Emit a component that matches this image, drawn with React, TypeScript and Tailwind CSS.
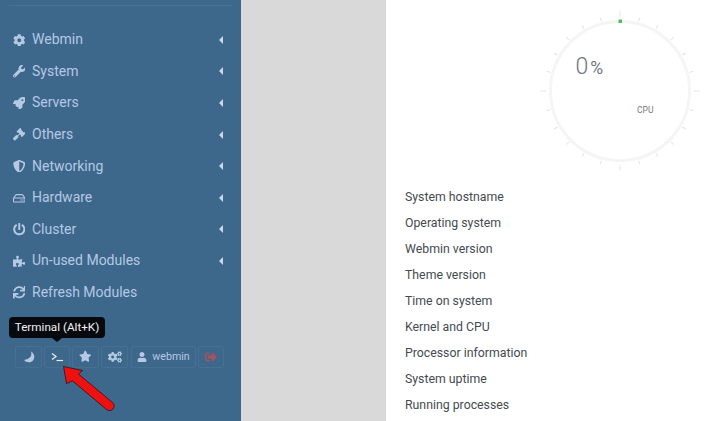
import { FaCog, FaWrench, FaRocket, FaGavel, FaShieldAlt, FaRegHdd, FaPowerOff, FaPuzzlePiece, FaSync, FaStar, FaCogs, FaUser, FaSignOutAlt } from "react-icons/fa";

const menu = [
  { label: "Webmin", icon: FaCog, arrow: true },
  { label: "System", icon: FaWrench, arrow: true },
  { label: "Servers", icon: FaRocket, arrow: true },
  { label: "Others", icon: FaGavel, arrow: true },
  { label: "Networking", icon: FaShieldAlt, arrow: true },
  { label: "Hardware", icon: FaRegHdd, arrow: true },
  { label: "Cluster", icon: FaPowerOff, arrow: true },
  { label: "Un-used Modules", icon: FaPuzzlePiece, arrow: true },
  { label: "Refresh Modules", icon: FaSync, arrow: false },
];

const info = [
  "System hostname",
  "Operating system",
  "Webmin version",
  "Theme version",
  "Time on system",
  "Kernel and CPU",
  "Processor information",
  "System uptime",
  "Running processes",
];

const ticks = Array.from({ length: 24 }, (_, i) => i * 15);

function Gauge() {
  return (
    <div className="relative w-[170px] h-[170px]">
      <svg width="170" height="170" viewBox="0 0 170 170">
        <circle cx="85" cy="85" r="69.5" fill="none" stroke="#f5f5f5" strokeWidth="3" />
        {ticks.map((a) => (
          <line
            key={a}
            x1="85"
            y1={a % 90 === 0 ? 5 : 9}
            x2="85"
            y2={a % 90 === 0 ? 11 : 13}
            stroke="#e4e4e4"
            strokeWidth="1"
            transform={`rotate(${a} 85 85)`}
          />
        ))}
        <rect x="83.5" y="13.5" width="3.5" height="3.5" fill="#5cb85c" />
      </svg>
      <div className="absolute left-[41px] top-[47px] flex items-baseline text-[#6b7680]">
        <span className="text-[23px] leading-[28px] font-light">0</span>
        <span className="text-[17.5px] leading-[28px] ml-[2px]">%</span>
      </div>
      <span className="absolute left-[102.5px] top-[98px] text-[8.5px] leading-[12px] text-[#77797b]">CPU</span>
    </div>
  );
}

export default function App() {
  return (
    <div className="flex w-[704px] h-[421px] overflow-hidden font-['Roboto',sans-serif]">
      <aside className="relative w-[241px] shrink-0 bg-[#3e678c] px-[9px] pt-[5px]">
        <div className="h-px bg-[#4a7195]" />
        <nav className="mt-[18px] flex flex-col">
          {menu.map((m) => (
            <div key={m.label} className="flex items-center h-[31.6px] pl-[3.5px] pr-[9px] text-[#b4c9e3]">
              <span className="w-[19.5px] flex items-center">
                <m.icon size={12.5} />
              </span>
              <span className="text-[14px] flex-1">{m.label}</span>
              {m.arrow && <span className="w-0 h-0 border-y-[4px] border-y-transparent border-r-[4px] border-r-[#c9d8ea]" />}
            </div>
          ))}
        </nav>

        <div className="absolute left-[9px] top-[317px] bg-[#06090d] text-[#f2f2f2] text-[11.7px] leading-[21px] h-[21px] w-[96px] rounded-[4px] text-center">
          Terminal (Alt+K)
          <span className="absolute left-[43px] top-[21px] w-0 h-0 border-x-[5px] border-x-transparent border-t-[4px] border-t-[#06090d]" />
        </div>

        <div className="mt-[37.4px] ml-[6px] flex gap-[2px] text-[#b4c9e3]">
          <button className="w-[27px] h-[22px] flex items-center justify-center border border-[#46708f] rounded-[2px]">
            <svg width="12" height="12" viewBox="0 0 12 12" fill="currentColor">
              <path d="M8 .5C9 4 8 7.5 1 9c2.500 2.800 7 3 9.200.200C12.200 6.500 11.500 2.500 8 .5Z" />
            </svg>
          </button>
          <button className="w-[26px] h-[22px] flex items-center justify-center border border-[#46708f] rounded-[2px]">
            <svg width="12" height="10" viewBox="0 0 12 10" fill="none" stroke="#e4ebf3">
              <path d="M1 1.5 5 4.5 1 7.5" strokeWidth="1.3" />
              <path d="M5.500 8.500H12" strokeWidth="1.2" />
            </svg>
          </button>
          <button className="w-[27px] h-[22px] flex items-center justify-center border border-[#46708f] rounded-[2px]">
            <FaStar size={12.5} />
          </button>
          <button className="w-[27px] h-[22px] flex items-center justify-center border border-[#46708f] rounded-[2px]">
            <FaCogs size={14} />
          </button>
          <button className="w-[65px] h-[22px] ml-[1px] flex items-center justify-center gap-[5px] border border-[#46708f] rounded-[2px] text-[10.7px]">
            <FaUser size={10} />
            webmin
          </button>
          <button className="w-[26px] h-[22px] flex items-center justify-center border border-[#46708f] rounded-[2px] text-[#a5545f]">
            <FaSignOutAlt size={12} />
          </button>
        </div>

        <svg className="absolute left-[55px] top-[358px]" width="70" height="60" viewBox="0 0 70 60">
          <path
            d="M8 8 27 12 23 15.600 57 44 A4.500 4.500 0 0 1 51 51 L17 22.400 11 25 Z"
            fill="#ee1111"
            stroke="#000000"
            strokeOpacity="0.7"
            strokeWidth="0.8"
            transform="translate(0.5 0.5)"
          />
        </svg>
      </aside>

      <div className="w-[145px] shrink-0 bg-[#d9d9d9]" />

      <main className="relative flex-1 bg-white pl-[19px] pt-[183.5px]">
        <div className="absolute left-[148.5px] top-[5.5px]">
          <Gauge />
        </div>
        <ul className="flex flex-col text-[12.3px] text-[#444a50]">
          {info.map((t) => (
            <li key={t} className="h-[26.1px] leading-[26px]">{t}</li>
          ))}
        </ul>
      </main>
    </div>
  );
}
